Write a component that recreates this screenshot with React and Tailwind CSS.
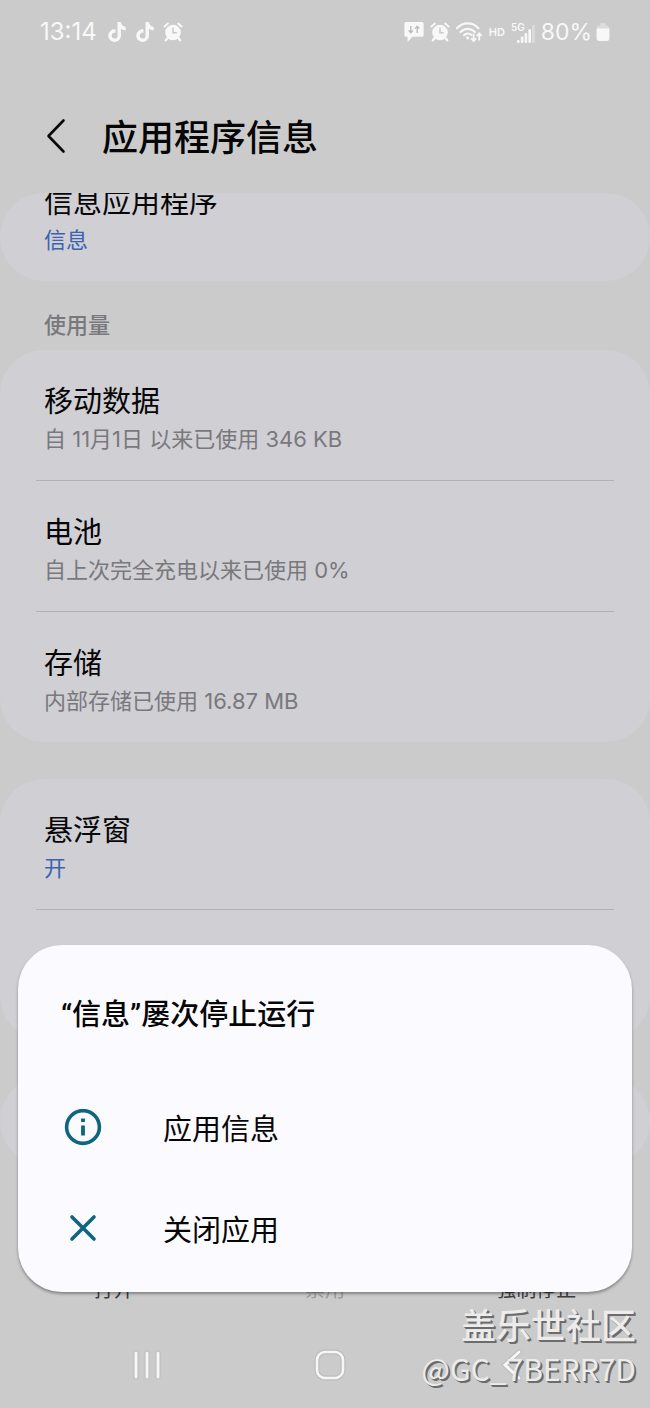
import React from "react";
import { FaTiktok } from "react-icons/fa6";

const usageItems = [
  { title: "移动数据", detail: "自 11月1日 以来已使用 346 KB" },
  { title: "电池", detail: "自上次完全充电以来已使用 0%" },
  { title: "存储", detail: "内部存储已使用 16.87 MB" },
];

const permissionItems = [
  { title: "悬浮窗", detail: "开", active: true },
  { title: "更改系统设置", detail: "否", active: true },
];

const actions = [
  { label: "打开", color: "text-[#3c3c3e]" },
  { label: "禁用", color: "text-[#9c9c9e]" },
  { label: "强制停止", color: "text-[#3c3c3e]" },
];

const AlarmIcon = () => (
  <svg className="w-5 h-5" viewBox="0 0 20 20" fill="none" stroke="currentColor" strokeLinecap="round">
    <circle cx="10" cy="10.5" r="7.8" fill="currentColor" stroke="none" />
    <path d="M1.5 4.5 4.8 1.6M18.5 4.5l-3.3-2.9" strokeWidth="2" />
    <path d="m4.6 16-1.8 2.2M15.4 16l1.8 2.2" strokeWidth="2.4" />
    <path d="M10 6.2v4.6h3.2" stroke="#cbcbcb" strokeWidth="1.6" />
  </svg>
);

const MessageIcon = () => (
  <svg className="w-5 h-5" viewBox="0 0 20 20" fill="none">
    <path
      d="M2 0h16a1.6 1.6 0 0 1 1.6 1.6v11.6a1.6 1.6 0 0 1-1.6 1.6H8.4L3.6 20v-5.2H2A1.6 1.6 0 0 1 .4 13.2V1.6A1.6 1.6 0 0 1 2 0Z"
      fill="currentColor"
    />
    <path
      d="M6.8 4v6.6M4.6 8.4l2.2 2.3L9 8.4M13.2 11V4.4M11 6.6l2.2-2.3 2.2 2.3"
      stroke="#b9b9b9"
      strokeWidth="1.3"
    />
  </svg>
);

const WifiIcon = () => (
  <svg className="w-[27px] h-5" viewBox="0 0 27 20" fill="none" stroke="currentColor">
    <path d="M1 6.2c6-6.4 15.4-6.4 21.4 0" strokeWidth="2.2" strokeLinecap="round" />
    <path d="M4.4 10c4.2-4.3 10.4-4.3 14.6 0" strokeWidth="2.2" strokeLinecap="round" />
    <path d="M8 13.2c2-2 5.2-2.3 7.4-.4" strokeWidth="2.2" strokeLinecap="round" />
    <circle cx="11.6" cy="15.8" r="1.6" fill="currentColor" stroke="none" />
    <path d="M17.6 11.4v7.4M15 16.4l2.6 2.6 2.4-2.6M23.2 18.6v-7M20.8 13.8l2.4-2.5 2.6 2.5" strokeWidth="1.8" />
  </svg>
);

const SignalIcon = () => (
  <svg className="w-[18px] h-[18px]" viewBox="0 0 18 18" fill="currentColor">
    <rect x="0" y="15" width="2.6" height="3" rx="1" />
    <rect x="3.8" y="11.6" width="2.6" height="6.4" rx="1" />
    <rect x="7.6" y="8" width="2.6" height="10" rx="1" />
    <rect x="11.4" y="4" width="2.6" height="14" rx="1" />
    <rect x="15.2" y="0" width="2.6" height="18" rx="1" opacity="0.4" />
  </svg>
);

const BatteryIcon = () => (
  <svg className="w-[14px] h-[18px]" viewBox="0 0 14 18" fill="currentColor">
    <path d="M1 5a2.4 2.4 0 0 1 2.4-2.4h.8V1a1 1 0 0 1 1-1h3.6a1 1 0 0 1 1 1v1.6h.8A2.4 2.4 0 0 1 13 5v1H1Z" opacity="0.4" />
    <path d="M.6 5.6h12.8v10A2.4 2.4 0 0 1 11 18H3a2.4 2.4 0 0 1-2.4-2.4Z" />
  </svg>
);

const StatusBar = () => (
  <div className="flex h-16 items-center justify-between px-10 text-[#f8f8f8]">
    <div className="flex items-center gap-2">
      <span className="text-[24px] leading-8">13:14</span>
      <FaTiktok className="ml-0.5 w-5 h-5" />
      <FaTiktok className="w-5 h-5" />
      <AlarmIcon />
    </div>
    <div className="flex items-center gap-1.5">
      <MessageIcon />
      <AlarmIcon />
      <WifiIcon />
      <span className="text-[11px] font-semibold">HD</span>
      <div className="flex items-end">
        <span className="self-start text-[10px] leading-3 font-semibold">5G</span>
        <div className="-ml-2 pt-1">
          <SignalIcon />
        </div>
      </div>
      <div className="flex items-center gap-1">
        <span className="text-[23px] leading-8">80%</span>
        <BatteryIcon />
      </div>
    </div>
  </div>
);

const SettingRow = ({ title, detail, active }) => (
  <button
    type="button"
    className="block w-full border-b border-[#b3b3b6] px-2 pt-8 pb-6 text-left last:border-b-0"
  >
    <span className="block text-[29px] leading-10 text-[#060606]">{title}</span>
    <span
      className={`block text-[22px] leading-[34px] ${active ? "text-[#3c62b2]" : "text-[#79787d]"}`}
    >
      {detail}
    </span>
  </button>
);

const Card = ({ items }) => (
  <section className="rounded-[44px] bg-[#d0cfd4] px-9">
    {items.map((item) => (
      <SettingRow key={item.title} {...item} />
    ))}
  </section>
);

const NavBar = () => (
  <nav className="grid h-[86px] grid-cols-3 items-center pr-[46px] pl-[55px] text-[#f6f6f6]">
    <button type="button" aria-label="最近" className="flex justify-center">
      <svg className="w-8 h-8" viewBox="0 0 32 32" fill="none" strokeLinecap="round">
        <path d="M5 4v24M16 4v24M27 4v24" stroke="#bcbcbc" strokeWidth="5" />
        <path d="M5 4v24M16 4v24M27 4v24" stroke="currentColor" strokeWidth="3" />
      </svg>
    </button>
    <button type="button" aria-label="主页" className="flex justify-center">
      <svg className="w-8 h-8" viewBox="0 0 32 32" fill="none">
        <rect x="3" y="3" width="26" height="26" rx="8" stroke="#bcbcbc" strokeWidth="5" />
        <rect x="3" y="3" width="26" height="26" rx="8" stroke="currentColor" strokeWidth="2.6" />
      </svg>
    </button>
    <button type="button" aria-label="返回" className="flex justify-center">
      <svg className="w-8 h-8" viewBox="0 0 32 32" fill="none" strokeLinecap="round">
        <path d="M22 3 8 16l14 13" stroke="#bcbcbc" strokeWidth="5" />
        <path d="M22 3 8 16l14 13" stroke="currentColor" strokeWidth="3" />
      </svg>
    </button>
  </nav>
);

const CrashDialog = () => (
  <div
    role="dialog"
    aria-labelledby="crash-title"
    className="absolute inset-x-[18px] bottom-[116px] rounded-[44px] bg-[#fbfbff] pt-[50px] pb-[13px] shadow-[0_2px_3px_rgba(0,0,0,0.35)]"
  >
    <h2
      id="crash-title"
      className="mb-[42px] px-[43px] font-['Roboto','Noto_Sans_CJK_SC',sans-serif] text-[29px] leading-10 font-medium text-[#060606]"
    >
      “信息”屡次停止运行
    </h2>
    <button type="button" className="flex h-[101px] w-full items-center gap-[61px] px-[46px] text-[29px] text-[#060606]">
      <svg className="w-[38px] h-[38px]" viewBox="0 0 38 38" fill="none" stroke="#0e657d">
        <circle cx="19" cy="18" r="16.4" strokeWidth="3.6" />
        <path d="M19 16.5V26.5M19 9.500v3.500" strokeWidth="3.8" />
      </svg>
      <span className="pt-1">应用信息</span>
    </button>
    <button type="button" className="flex h-[101px] w-full items-center gap-[61px] px-[46px] text-[29px] text-[#060606]">
      <svg className="w-[38px] h-[38px]" viewBox="0 0 38 38" fill="none" stroke="#0e657d">
        <path d="m8 7 22 22M30 7 8 29" strokeWidth="3.6" strokeLinecap="round" />
      </svg>
      <span className="pt-1">关闭应用</span>
    </button>
  </div>
);

const App = () => {
  return (
    <div className="relative flex min-h-screen flex-col overflow-hidden bg-[#cbcbcb] font-['Inter','Noto_Sans_CJK_SC',sans-serif]">
      <StatusBar />

      {/* Header */}
      <header className="flex items-center gap-9 px-[46px] pt-[42px] pb-[27px]">
        <button type="button" aria-label="返回">
          <svg className="w-5 h-9" viewBox="0 0 20 36" fill="none" stroke="#0a0a0a">
            <path d="M17.5 2.5 2.5 18l15 15.5" strokeWidth="2.6" strokeLinecap="round" strokeLinejoin="round" />
          </svg>
        </button>
        <h1 className="pt-1 text-[36px] leading-[56px] font-medium text-[#060606]">应用程序信息</h1>
      </header>

      {/* Settings list */}
      <main>
        <section className="flex h-[88px] flex-col justify-end overflow-hidden rounded-[44px] bg-[#d0cfd4] px-9">
          <SettingRow title="信息应用程序" detail="信息" active />
        </section>
        <h2 className="px-11 pt-7 pb-[9px] text-[22px] leading-8 font-medium text-[#79787d]">使用量</h2>
        <div className="flex flex-col gap-[37px]">
          <Card items={usageItems} />
          <Card items={permissionItems} />
          <section className="h-[88px] rounded-[44px] bg-[#d0cfd4]" />
        </div>
      </main>

      {/* Bottom actions */}
      <footer className="mt-auto">
        <div className="grid grid-cols-3 px-2 pb-[18px]">
          {actions.map((action) => (
            <button key={action.label} type="button" className={`text-[20px] leading-7 ${action.color}`}>
              {action.label}
            </button>
          ))}
        </div>
        <NavBar />
      </footer>

      <CrashDialog />

      {/* Watermark */}
      <div className="absolute right-[14px] bottom-[18px] text-right font-['Noto_Sans_CJK_SC',sans-serif] text-[#ececec] [text-shadow:1px_1px_0_#6c6c6c,2px_2px_0_#6c6c6c]">
        <p className="text-[35px] leading-[44px] font-medium">盖乐世社区</p>
        <p className="text-[30px] leading-[44px]">@GC_7BERR7D</p>
      </div>
    </div>
  );
};

export default App;
